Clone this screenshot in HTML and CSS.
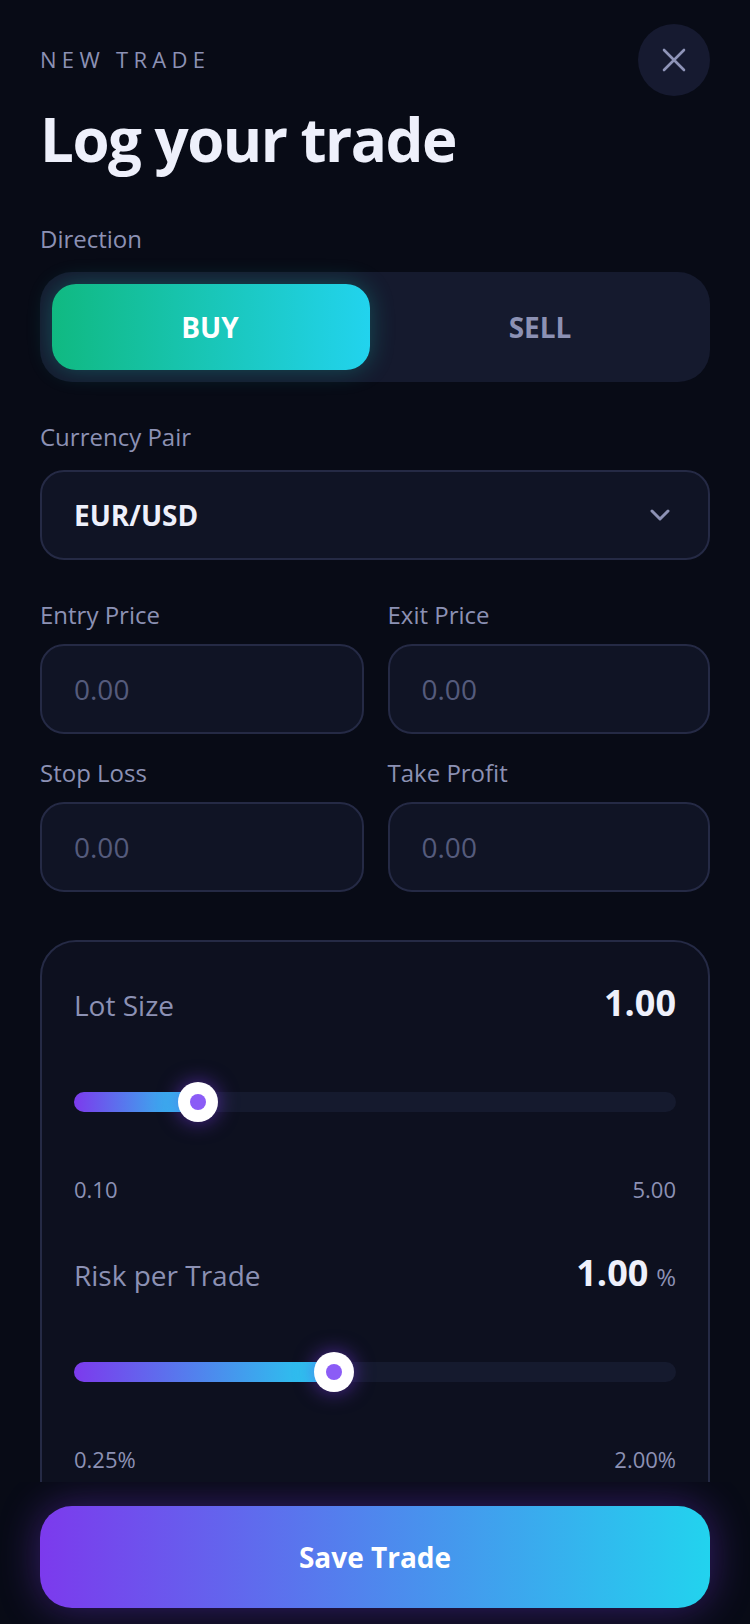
FILE: index.html
```html
<!DOCTYPE html>
<html lang="en">
<head>
  <meta charset="UTF-8" />
  <meta name="viewport" content="width=device-width, initial-scale=1.0"/>
  <title>Log your trade</title>
  <link rel="stylesheet" href="styles.css">
</head>
<body>
  <div class="app">
    <main class="sheet">
      <header class="top">
        <div>
          <div class="eyebrow">NEW TRADE</div>
          <h1>Log your trade</h1>
        </div>
        <button class="close" aria-label="Close">
          <svg width="24" height="24" viewBox="0 0 24 24"><path d="M2 2 22 22M22 2 2 22"/></svg>
        </button>
      </header>

      <div class="label">Direction</div>
      <div class="toggle">
        <button class="side active">BUY</button>
        <button class="side">SELL</button>
      </div>

      <div class="label pair-label">Currency Pair</div>
      <div class="field select">
        <span>EUR/USD</span>
        <svg width="20" height="12" viewBox="0 0 20 12"><path d="M2 2 10 10 18 2"/></svg>
      </div>

      <div class="grid">
        <div>
          <div class="label tight">Entry Price</div>
          <input class="field" placeholder="0.00"/>
        </div>
        <div>
          <div class="label tight">Exit Price</div>
          <input class="field" placeholder="0.00"/>
        </div>
        <div>
          <div class="label tight">Stop Loss</div>
          <input class="field" placeholder="0.00"/>
        </div>
        <div>
          <div class="label tight">Take Profit</div>
          <input class="field" placeholder="0.00"/>
        </div>
      </div>

      <section class="panel">
        <div class="slider-block">
          <div class="slider-head">
            <span class="slider-name">Lot Size</span>
            <span class="slider-value">1.00</span>
          </div>
          <div class="track"><div class="fill" style="width: 20.6%"><span class="thumb"></span></div></div>
          <div class="scale"><span>0.10</span><span>5.00</span></div>
        </div>
        <div class="slider-block">
          <div class="slider-head">
            <span class="slider-name">Risk per Trade</span>
            <span class="slider-value">1.00 <small>%</small></span>
          </div>
          <div class="track"><div class="fill" style="width: 43.2%"><span class="thumb"></span></div></div>
          <div class="scale"><span>0.25%</span><span>2.00%</span></div>
        </div>
      </section>
    </main>

    <footer class="bottom">
      <button class="save">Save Trade</button>
    </footer>
  </div>
</body>
</html>
```

FILE: styles.css
```css
* {
  box-sizing: border-box;
}
body {
  margin: 0;
  background: #080b16;
  color: #eef0fb;
  font-family: "Open Sans", sans-serif;
}
button {
  font-family: inherit;
  border: none;
}
.app {
  height: 1624px;
  display: flex;
  flex-direction: column;
}
.sheet {
  flex: 1;
  min-height: 0;
  overflow: hidden;
  padding: 24px 40px 0;
}
.top {
  display: flex;
  justify-content: space-between;
  align-items: flex-start;
  height: 200px;
}
.eyebrow {
  margin-top: 20px;
  font-size: 22px;
  line-height: 30px;
  letter-spacing: 5.3px;
  color: #8c91b4;
}
h1 {
  margin: 29px 0 0;
  font-size: 60px;
  line-height: 72px;
  font-weight: 700;
  letter-spacing: -1.5px;
}
.close {
  width: 72px;
  height: 72px;
  border-radius: 50%;
  background: #161a30;
  display: flex;
  align-items: center;
  justify-content: center;
  padding: 0;
}
.close path {
  fill: none;
  stroke: #8f94b8;
  stroke-width: 2.6;
  stroke-linecap: round;
}
.label {
  font-size: 24px;
  line-height: 30px;
  color: #8c91b4;
  margin-bottom: 18px;
}
.label.tight {
  margin-bottom: 14px;
}
.pair-label {
  margin-top: 40px;
}
.toggle {
  height: 110px;
  padding: 12px;
  display: flex;
  gap: 10px;
  border-radius: 32px;
  background: #151a2e;
}
.side {
  flex: 1;
  padding: 0 0 0 2px;
  border-radius: 24px;
  background: transparent;
  color: #8c91b4;
  font-size: 28px;
  font-weight: 700;
}
.side.active {
  padding: 0 2px 0 0;
  color: #fff;
  background: linear-gradient(90deg, #10b981, #22d3ee);
  box-shadow: 0 0 24px rgba(24, 205, 190, 0.3);
}
.field {
  display: block;
  width: 100%;
  height: 90px;
  padding: 0 32px;
  border: 2px solid #252a45;
  border-radius: 24px;
  background: #101425;
  color: #eef0fb;
  font-family: inherit;
  font-size: 28px;
  outline: none;
}
.field::placeholder {
  color: #555b7c;
  opacity: 1;
}
.select {
  display: flex;
  align-items: center;
  justify-content: space-between;
  padding-right: 38px;
  font-weight: 700;
}
.select path {
  fill: none;
  stroke: #8c91b4;
  stroke-width: 3;
  stroke-linecap: round;
  stroke-linejoin: round;
}
.grid {
  margin-top: 40px;
  display: grid;
  grid-template-columns: 323.5px 322.5px;
  gap: 24px;
}
.panel {
  margin-top: 48px;
  height: 600px;
  padding: 32px;
  border: 2px solid #252a45;
  border-radius: 36px;
  background: #0d101f;
}
.slider-block {
  height: 270px;
}
.slider-head {
  display: flex;
  justify-content: space-between;
  align-items: baseline;
  height: 48px;
  padding-top: 4px;
}
.slider-name {
  font-size: 28px;
  color: #8c91b4;
}
.slider-value {
  font-size: 36px;
  font-weight: 700;
  word-spacing: -1.5px;
}
.slider-value small {
  font-size: 24px;
  font-weight: 400;
  color: #8c91b4;
}
.track {
  margin-top: 70px;
  height: 20px;
  border-radius: 10px;
  background: #151a2e;
}
.fill {
  position: relative;
  height: 100%;
  border-radius: 10px 0 0 10px;
  background: linear-gradient(90deg, #7c3aed, #22d3ee);
}
.thumb {
  position: absolute;
  right: -20px;
  top: -10px;
  width: 40px;
  height: 40px;
  border-radius: 50%;
  background: #fff;
  box-shadow: 0 0 20px rgba(124, 58, 237, 0.6);
}
.thumb::after {
  content: "";
  position: absolute;
  left: 12px;
  top: 12px;
  width: 16px;
  height: 16px;
  border-radius: 50%;
  background: #8b5cf6;
}
.scale {
  margin-top: 62px;
  display: flex;
  justify-content: space-between;
  font-size: 22px;
  line-height: 30px;
  color: #8c91b4;
}
.bottom {
  height: 142px;
  flex: none;
  overflow: hidden;
  padding: 24px 40px 16px;
  background: #080b16;
}
.save {
  width: 100%;
  height: 102px;
  border-radius: 32px;
  color: #fff;
  font-size: 28px;
  font-weight: 700;
  background: linear-gradient(90deg, #7c3aed, #22d3ee);
  box-shadow: 0 0 40px rgba(124, 58, 237, 0.4);
}
```
